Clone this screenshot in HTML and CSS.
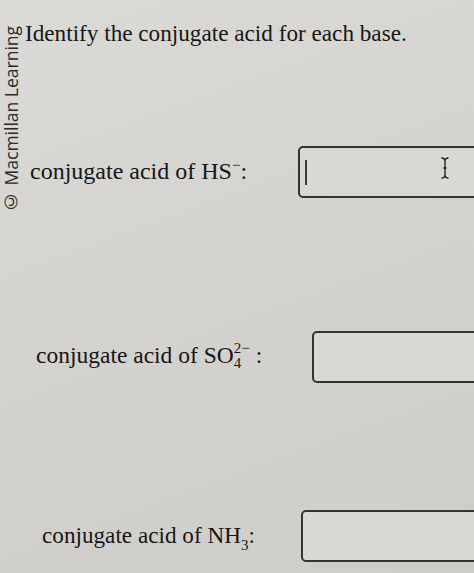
FILE: index.html
```html
<!DOCTYPE html>
<html>
<head>
<meta charset="utf-8">
<link rel="stylesheet" href="styles.css">
</head>
<body>
<div class="page">
  <div class="side"><span class="credit">© Macmillan Learning</span></div>
  <div class="main">
    <div class="title">Identify the conjugate acid for each base.</div>
    <div class="row row-1">
      <div class="label label-1">conjugate acid of HS<sup class="sup">−</sup>:</div>
      <div class="box">
        <span class="caret"></span>
        <svg class="ibeam" width="10" height="22" viewBox="0 0 10 22">
          <path d="M1.5 1 Q5 1 5 4 Q5 1 8.5 1 M5 4 L5 18 M1.5 21 Q5 21 5 18 Q5 21 8.5 21 M3.5 11 L6.5 11" fill="none" stroke="#1a1a1a" stroke-width="1.3"/>
        </svg>
      </div>
    </div>
    <div class="row row-2">
      <div class="label label-2">conjugate acid of SO<span class="chem"><span class="chem-sup">2−</span><span class="chem-sub">4</span></span>:</div>
      <div class="box"></div>
    </div>
    <div class="row row-3">
      <div class="label label-3">conjugate acid of NH<sub class="sub">3</sub>:</div>
      <div class="box"></div>
    </div>
  </div>
</div>
</body>
</html>
```
FILE: styles.css
```css
html, body {
  margin: 0;
  padding: 0;
}
body {
  width: 474px;
  height: 573px;
  overflow: hidden;
  background: linear-gradient(160deg, #dcdad7 0%, #d5d3d0 45%, #cfcdca 100%);
  font-family: "Liberation Serif", "Times New Roman", serif;
  color: #161616;
}
.page {
  display: flex;
  height: 573px;
}
.side {
  width: 22px;
  flex: none;
  padding-top: 26px;
}
.credit {
  display: block;
  writing-mode: vertical-rl;
  transform: rotate(180deg);
  font-family: "Open Sans", "DejaVu Sans", sans-serif;
  font-size: 17.5px;
  line-height: 22px;
  color: #2a2a2a;
  white-space: nowrap;
  height: 188px;
  text-align: left;
}
.main {
  flex: 1;
  padding-top: 18px;
}
.title {
  font-size: 23.2px;
  line-height: 30px;
  margin-left: 3px;
}
.row {
  display: flex;
  align-items: center;
  height: 52px;
}
.row-1 { margin-top: 98px; padding-left: 8px; }
.row-2 { margin-top: 133px; padding-left: 14px; }
.row-3 { margin-top: 127px; padding-left: 20px; }
.label {
  flex: none;
  font-size: 24px;
  white-space: nowrap;
  line-height: 30px;
  margin-bottom: 3px;
}
.label-1 { width: 268px; }
.label-2 { width: 276px; font-size: 23.5px; }
.label-3 { width: 259px; font-size: 23.2px; }
.sup {
  font-size: 15px;
  line-height: 0;
  vertical-align: 9px;
}
.sub {
  font-size: 15px;
  line-height: 0;
  vertical-align: -7px;
}
.chem {
  display: inline-flex;
  flex-direction: column;
  align-items: flex-start;
  vertical-align: 10px;
  font-size: 15px;
  line-height: 15px;
  margin-right: 6px;
}
.box {
  flex: none;
  width: 200px;
  height: 48px;
  border: 2px solid #333333;
  border-radius: 5px;
  background: #dad8d5;
  display: flex;
  align-items: center;
  position: relative;
}
.caret {
  width: 2px;
  height: 25px;
  background: #3a3a3a;
  margin-left: 5px;
}
.ibeam {
  position: absolute;
  left: 140px;
  top: 9px;
}
```
